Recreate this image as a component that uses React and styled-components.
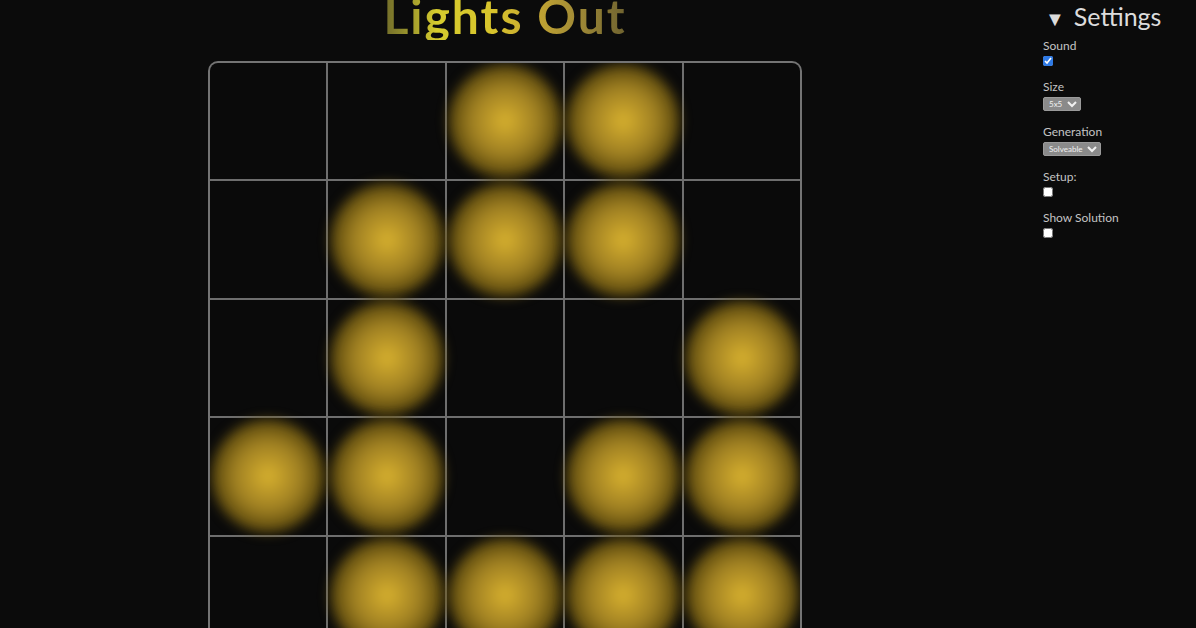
import React, { useState } from 'react';
import styled, { createGlobalStyle } from 'styled-components';

const GlobalStyle = createGlobalStyle`
  html, body {
    margin: 0;
    padding: 0;
    background: #0b0b0b;
    overflow: hidden;
  }
  body {
    font-family: Lato, "Open Sans", sans-serif;
    color: #cfcfcf;
  }
`;

const Page = styled.div`
  display: flex;
  width: 1196px;
  height: 628px;
  overflow: hidden;
`;

const Main = styled.main`
  flex: 1;
  display: flex;
  flex-direction: column;
  align-items: center;
`;

const Title = styled.h1`
  margin: -8px 0 0;
  font-size: 48px;
  line-height: 48px;
  font-weight: 700;
  letter-spacing: 2px;
  background: linear-gradient(
    90deg,
    #6f6a2a 0%,
    #8f8a2c 8%,
    #d6cc2e 22%,
    #d8c42c 45%,
    #c4a632 62%,
    #a08a36 80%,
    #6e6230 100%
  );
  -webkit-background-clip: text;
  background-clip: text;
  color: transparent;
`;

const Board = styled.div`
  margin-top: 21px;
  width: 590px;
  height: 590px;
  flex-shrink: 0;
  display: grid;
  grid-template-columns: repeat(5, minmax(0, 1fr));
  grid-template-rows: repeat(5, minmax(0, 1fr));
  gap: 2px;
  border: 2px solid #747474;
  border-radius: 10px;
  background: #6e6e6e;
  overflow: hidden;
`;

const Cell = styled.div`
  display: flex;
  align-items: center;
  justify-content: center;
  min-width: 0;
  min-height: 0;
  background: #0a0a0a;
`;

const Light = styled.div`
  width: 114px;
  height: 114px;
  flex-shrink: 0;
  border-radius: 50%;
  background: radial-gradient(
    circle,
    #d9b32f 0%,
    #bf9b29 18%,
    #9e7f22 42%,
    rgba(118, 94, 18, 0.9) 62%,
    rgba(70, 55, 11, 0.6) 82%,
    rgba(30, 24, 6, 0) 100%
  );
  filter: blur(6px);
  opacity: ${({ $on }) => ($on ? 1 : 0)};
`;

const Aside = styled.aside`
  width: 153px;
  flex-shrink: 0;
  padding: 2px 0 0 33px;
`;

const Details = styled.details`
  font-size: 12px;
`;

const Summary = styled.summary`
  list-style: none;
  font-size: 25px;
  line-height: 28px;
  color: #dcdcdc;
  margin-bottom: 8px;
  padding-left: 2px;
  cursor: pointer;
  &::-webkit-details-marker {
    display: none;
  }
`;

const Marker = styled.span`
  font-size: 20px;
  margin-right: 9px;
`;

const Fields = styled.div`
  display: flex;
  flex-direction: column;
  gap: 15px;
`;

const Field = styled.label`
  display: flex;
  flex-direction: column;
  align-items: flex-start;
  gap: 4px;
`;

const FieldName = styled.span`
  font-size: 12px;
  line-height: 12px;
  color: #c4c4c4;
`;

const Check = styled.input.attrs({ type: 'checkbox' })`
  width: 10px;
  height: 10px;
  margin: 0;
  accent-color: #2f7ae5;
`;

const Select = styled.select`
  height: 14px;
  font-family: Lato, sans-serif;
  font-size: 8px;
  padding: 0 1px;
  color: #f0f0f0;
  background: #8a8a8a;
  border: 1px solid #9a9a9a;
  border-radius: 2px;
`;

const lit = [
  [0, 0, 1, 1, 0],
  [0, 1, 1, 1, 0],
  [0, 1, 0, 0, 1],
  [1, 1, 0, 1, 1],
  [0, 1, 1, 1, 1],
];

export default function App() {
  const [board, setBoard] = useState(lit);
  const [sound, setSound] = useState(true);

  const toggle = (r, c) => {
    setBoard((b) =>
      b.map((row, ri) =>
        row.map((v, ci) =>
          (ri === r && Math.abs(ci - c) <= 1) || (ci === c && Math.abs(ri - r) <= 1)
            ? 1 - v
            : v
        )
      )
    );
  };

  return (
    <Page>
      <GlobalStyle />
      <Main>
        <Title>Lights Out</Title>
        <Board>
          {board.map((row, r) =>
            row.map((v, c) => (
              <Cell key={`${r}-${c}`} onClick={() => toggle(r, c)}>
                <Light $on={v === 1} />
              </Cell>
            ))
          )}
        </Board>
      </Main>
      <Aside>
        <Details open>
          <Summary>
            <Marker>▼</Marker>Settings
          </Summary>
          <Fields>
            <Field>
              <FieldName>Sound</FieldName>
              <Check checked={sound} onChange={() => setSound(!sound)} />
            </Field>
            <Field>
              <FieldName>Size</FieldName>
              <Select defaultValue="5x5">
                <option>3x3</option>
                <option>4x4</option>
                <option>5x5</option>
                <option>6x6</option>
              </Select>
            </Field>
            <Field>
              <FieldName>Generation</FieldName>
              <Select defaultValue="Solveable">
                <option>Solveable</option>
                <option>Random</option>
              </Select>
            </Field>
            <Field>
              <FieldName>Setup:</FieldName>
              <Check />
            </Field>
            <Field>
              <FieldName>Show Solution</FieldName>
              <Check />
            </Field>
          </Fields>
        </Details>
      </Aside>
    </Page>
  );
}
